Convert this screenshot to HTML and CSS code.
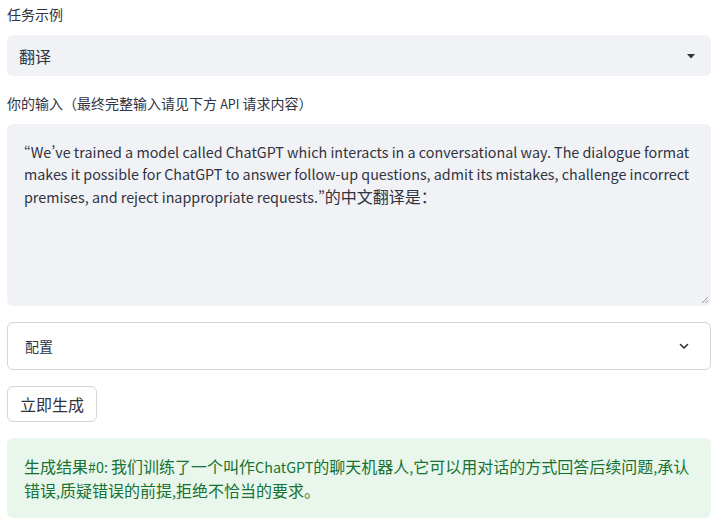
FILE: index.html
```html
<!DOCTYPE html>
<html lang="zh">
<head>
    <meta charset="UTF-8">
    <meta name="viewport" content="width=device-width, initial-scale=1.0">
    <title>任务示例</title>
    <link rel="stylesheet" href="styles.css">
</head>
<body>
    <div class="main">
        <div class="field">
            <label class="field-label">任务示例</label>
            <div class="select">
                <span>翻译</span>
                <svg class="caret" width="12" height="12" viewBox="0 0 12 12"><path d="M2 4h8L6 8.5z" fill="#31333f"/></svg>
            </div>
        </div>

        <div class="field">
            <label class="field-label">你的输入（最终完整输入请见下方 <span class="en">API</span> 请求内容）</label>
            <div class="textarea">
                <span class="en">“We’ve trained a model called ChatGPT which interacts in a conversational way. The dialogue format makes it possible for ChatGPT to answer follow-up questions, admit its mistakes, challenge incorrect premises, and reject inappropriate requests.”</span>的中文翻译是：
                <svg class="grip" width="8" height="8" viewBox="0 0 8 8"><path d="M7 1L1 7M7 4.5L4.5 7" stroke="#8c8e95" stroke-width="0.9"/></svg>
            </div>
        </div>

        <div class="expander">
            <span>配置</span>
            <svg width="16" height="16" viewBox="0 0 16 16"><path d="M4.5 6.5L8 10l3.5-3.5" fill="none" stroke="#31333f" stroke-width="1.6" stroke-linecap="round" stroke-linejoin="round"/></svg>
        </div>

        <div>
            <button class="btn">立即生成</button>
        </div>

        <div class="success">
            生成结果<span class="en">#0: </span>我们训练了一个叫作<span class="en">ChatGPT</span>的聊天机器人<span class="en">,</span>它可以用对话的方式回答后续问题<span class="en">,</span>承认错误<span class="en">,</span>质疑错误的前提<span class="en">,</span>拒绝不恰当的要求。
        </div>
    </div>
</body>
</html>
```

FILE: styles.css
```css
body {
    margin: 0;
    font-family: "Noto Sans CJK SC", "Noto Sans", sans-serif;
    color: #31333f;
    background: #fff;
}

/* latin runs: the CJK font draws its latin glyphs a bit large */
.en {
    font-size: 0.895em;
    line-height: 1;
    font-feature-settings: "pwid";
}

.main {
    padding: 3px 6px 0 7px;
    display: flex;
    flex-direction: column;
    gap: 16px;
}

.field-label {
    display: block;
    font-size: 14px;
    line-height: 22px;
    margin-bottom: 10px;
}

.select {
    height: 41px;
    background: #f0f2f6;
    border-radius: 6px;
    display: flex;
    align-items: center;
    justify-content: space-between;
    padding: 0 14px 0 12px;
    font-size: 16px;
}

.caret {
    margin-top: 1px;
}

.textarea {
    position: relative;
    box-sizing: border-box;
    height: 182px;
    background: #f0f2f6;
    border-radius: 6px;
    padding: 16px 18px 16px 17px;
    font-size: 16px;
    line-height: 22.4px;
}

.grip {
    position: absolute;
    right: 2px;
    bottom: 2px;
}

.expander {
    height: 48px;
    box-sizing: border-box;
    border: 1px solid #d6d6d9;
    border-radius: 6px;
    display: flex;
    align-items: center;
    justify-content: space-between;
    padding: 0 18px 0 17px;
    font-size: 14px;
}

.btn {
    font-family: inherit;
    font-size: 16px;
    color: #31333f;
    background: #fff;
    border: 1px solid #d6d6d9;
    border-radius: 6px;
    height: 36px;
    padding: 0 12px;
    cursor: pointer;
}

.success {
    background: #e9f6ec;
    color: #177233;
    border-radius: 6px;
    padding: 16px 18px 16px 17px;
    font-size: 16px;
    line-height: 24px;
}
```
